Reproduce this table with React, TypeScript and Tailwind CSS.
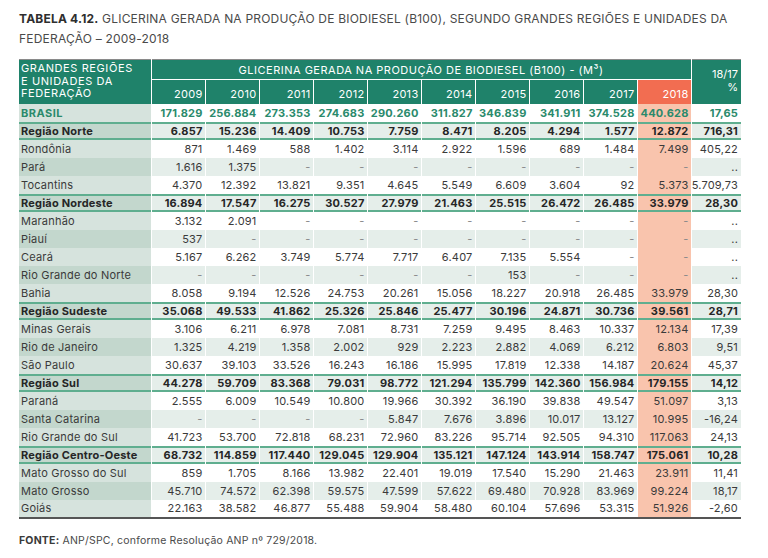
import React from 'react';

type Row = {
  name: string;
  values: string[];
  pct: string;
  kind?: 'total' | 'region';
};

const years = ['2009', '2010', '2011', '2012', '2013', '2014', '2015', '2016', '2017', '2018'];

const rows: Row[] = [
  { name: 'BRASIL', kind: 'total', values: ['171.829', '256.884', '273.353', '274.683', '290.260', '311.827', '346.839', '341.911', '374.528', '440.628'], pct: '17,65' },
  { name: 'Região Norte', kind: 'region', values: ['6.857', '15.236', '14.409', '10.753', '7.759', '8.471', '8.205', '4.294', '1.577', '12.872'], pct: '716,31' },
  { name: 'Rondônia', values: ['871', '1.469', '588', '1.402', '3.114', '2.922', '1.596', '689', '1.484', '7.499'], pct: '405,22' },
  { name: 'Pará', values: ['1.616', '1.375', '-', '-', '-', '-', '-', '-', '-', '-'], pct: '..' },
  { name: 'Tocantins', values: ['4.370', '12.392', '13.821', '9.351', '4.645', '5.549', '6.609', '3.604', '92', '5.373'], pct: '5.709,73' },
  { name: 'Região Nordeste', kind: 'region', values: ['16.894', '17.547', '16.275', '30.527', '27.979', '21.463', '25.515', '26.472', '26.485', '33.979'], pct: '28,30' },
  { name: 'Maranhão', values: ['3.132', '2.091', '-', '-', '-', '-', '-', '-', '-', '-'], pct: '..' },
  { name: 'Piauí', values: ['537', '-', '-', '-', '-', '-', '-', '-', '-', '-'], pct: '..' },
  { name: 'Ceará', values: ['5.167', '6.262', '3.749', '5.774', '7.717', '6.407', '7.135', '5.554', '-', '-'], pct: '..' },
  { name: 'Rio Grande do Norte', values: ['-', '-', '-', '-', '-', '-', '153', '-', '-', '-'], pct: '..' },
  { name: 'Bahia', values: ['8.058', '9.194', '12.526', '24.753', '20.261', '15.056', '18.227', '20.918', '26.485', '33.979'], pct: '28,30' },
  { name: 'Região Sudeste', kind: 'region', values: ['35.068', '49.533', '41.862', '25.326', '25.846', '25.477', '30.196', '24.871', '30.736', '39.561'], pct: '28,71' },
  { name: 'Minas Gerais', values: ['3.106', '6.211', '6.978', '7.081', '8.731', '7.259', '9.495', '8.463', '10.337', '12.134'], pct: '17,39' },
  { name: 'Rio de Janeiro', values: ['1.325', '4.219', '1.358', '2.002', '929', '2.223', '2.882', '4.069', '6.212', '6.803'], pct: '9,51' },
  { name: 'São Paulo', values: ['30.637', '39.103', '33.526', '16.243', '16.186', '15.995', '17.819', '12.338', '14.187', '20.624'], pct: '45,37' },
  { name: 'Região Sul', kind: 'region', values: ['44.278', '59.709', '83.368', '79.031', '98.772', '121.294', '135.799', '142.360', '156.984', '179.155'], pct: '14,12' },
  { name: 'Paraná', values: ['2.555', '6.009', '10.549', '10.800', '19.966', '30.392', '36.190', '39.838', '49.547', '51.097'], pct: '3,13' },
  { name: 'Santa Catarina', values: ['-', '-', '-', '-', '5.847', '7.676', '3.896', '10.017', '13.127', '10.995'], pct: '-16,24' },
  { name: 'Rio Grande do Sul', values: ['41.723', '53.700', '72.818', '68.231', '72.960', '83.226', '95.714', '92.505', '94.310', '117.063'], pct: '24,13' },
  { name: 'Região Centro-Oeste', kind: 'region', values: ['68.732', '114.859', '117.440', '129.045', '129.904', '135.121', '147.124', '143.914', '158.747', '175.061'], pct: '10,28' },
  { name: 'Mato Grosso do Sul', values: ['859', '1.705', '8.166', '13.982', '22.401', '19.019', '17.540', '15.290', '21.463', '23.911'], pct: '11,41' },
  { name: 'Mato Grosso', values: ['45.710', '74.572', '62.398', '59.575', '47.599', '57.622', '69.480', '70.928', '83.969', '99.224'], pct: '18,17' },
  { name: 'Goiás', values: ['22.163', '38.582', '46.877', '55.488', '59.904', '58.480', '60.104', '57.696', '53.315', '51.926'], pct: '-2,60' },
];

export default function App() {
  return (
    <div className="w-[768px] h-[558px] bg-white pl-[19px] pt-[9px] font-['Inter','Open_Sans',sans-serif] text-[#3c3c3c]">
      {/* Title */}
      <h1 className="text-[12px] leading-[20px] w-[730px] tracking-[0.2px] text-[#4a4a4a] whitespace-nowrap">
        <div>
          <b className="font-bold text-[#2e2e2e]">TABELA 4.12.</b> GLICERINA GERADA NA PRODUÇÃO DE BIODIESEL (B100), SEGUNDO GRANDES REGIÕES E UNIDADES DA
        </div>
        <div>FEDERAÇÃO – 2009-2018</div>
      </h1>

      <table className="mt-[10px] w-[722px] table-fixed border-collapse border-t border-t-[#8a8a8a] border-b-2 border-b-[#555] text-[11px] leading-[14px]">
        <colgroup>
          <col className="w-[132px]" />
          {years.map((y) => (
            <col key={y} className="w-[54px]" />
          ))}
          <col className="w-[50px]" />
        </colgroup>
        <thead>
          <tr className="h-[20px] bg-[#1f826a] text-white">
            <th rowSpan={2} className="align-top text-left font-normal uppercase text-[11px] leading-[12.5px] pt-[2px] pl-[2px] border-r border-white tracking-[0.6px]">
              <div>Grandes regiões</div>
              <div>e unidades da</div>
              <div>federação</div>
            </th>
            <th colSpan={10} className="font-normal text-[11px] uppercase text-center border-b border-r border-white tracking-[0.5px]">
              Glicerina gerada na produção de biodiesel (B100) - (M³)
            </th>
            <th rowSpan={2} className="align-top text-right font-normal text-[11px] leading-[13px] pt-[8px] pr-[3px]">
              <div>18/17</div>
              <div>%</div>
            </th>
          </tr>
          <tr className="h-[24px] text-white">
            {years.map((y) => (
              <th
                key={y}
                className={`font-normal text-right pr-[2px] pt-[4px] border-r border-white tracking-[0.3px] ${
                  y === '2018' ? 'bg-[#f26d51]' : 'bg-[#1f826a]'
                }`}
              >
                {y}
              </th>
            ))}
          </tr>
        </thead>
        <tbody>
          {rows.map((row, i) => {
            const striped = i % 2 === 1;
            const isRegion = row.kind === 'region';
            const isTotal = row.kind === 'total';
            // region rows get a green rule above and below
            const rule = isRegion ? 'shadow-[inset_0_2px_0_#5fae8f,inset_0_-2px_0_#5fae8f]' : '';
            const textCls = isTotal
              ? 'font-bold text-[#2a8a6c]'
              : isRegion
              ? 'font-bold text-[#262626]'
              : 'text-[#3a3a3a]';
            return (
              <tr key={row.name} className={`h-[18px] ${textCls}`}>
                <td
                  className={`p-0 pl-[2px] border-r border-r-white whitespace-nowrap ${rule} ${
                    striped ? 'bg-[#c3d7cd]' : 'bg-[#d6e3dd]'
                  } ${isTotal ? 'tracking-[0.5px]' : 'tracking-[0.2px]'}`}
                >
                  {row.name}
                </td>
                {row.values.map((v, j) => {
                  const is2018 = j === 9;
                  const bg = is2018 ? 'bg-[#f9c4ad]' : striped ? 'bg-[#e5eeea]' : 'bg-white';
                  return (
                    <td
                      key={j}
                      className={`p-0 text-right pr-[2px] border-r border-r-white tracking-[0.2px] ${rule} ${bg} ${
                        v === '-' ? 'text-[#8a8a8a] font-normal' : ''
                      }`}
                    >
                      {v}
                    </td>
                  );
                })}
                <td className={`p-0 text-right pr-[3px] tracking-[0.2px] ${rule} ${striped ? 'bg-[#e5eeea]' : 'bg-white'}`}>
                  {row.pct}
                </td>
              </tr>
            );
          })}
        </tbody>
      </table>

      <p className="mt-[14px] text-[10.5px] tracking-[0.2px] text-[#4a4a4a]">
        <b className="font-bold text-[#3a3a3a]">FONTE:</b> ANP/SPC, conforme Resolução ANP nº 729/2018.
      </p>
    </div>
  );
}
